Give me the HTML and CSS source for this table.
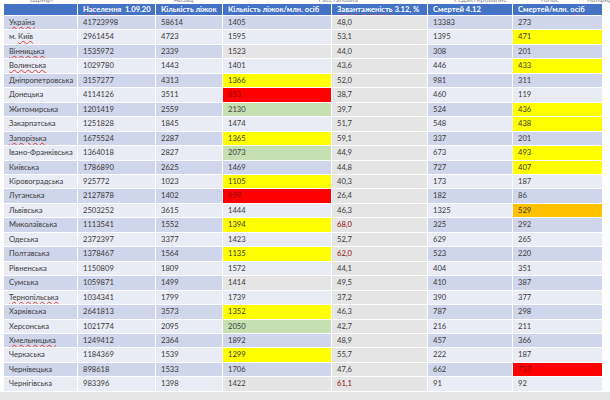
FILE: index.html
```html
<!DOCTYPE html>
<html lang="uk">
<head>
<meta charset="utf-8">
<title>Ліжка</title>
<link rel="stylesheet" href="styles.css">
</head>
<body>
<div class="ribbon">
  <span class="rb rb1">Шрифт</span>
  <span class="rb rb2">Абзац</span>
  <span class="rb rb3">Расстановка</span>
  <span class="rb rb4">Редактирование</span>
  <span class="rb rb5">Голос</span>
  <span class="rb rb6">Конфиденц</span>
</div>
<div class="sheet">
  <div class="row head"><div></div><div><span class="sq">Населення</span>&nbsp; 1.09.20</div><div>Кількість ліжок</div><div>Кількість ліжок/млн. осіб</div><div><span class="sq">Завантаженість</span> 3.12, %</div><div>Смертей 4.12</div><div>Смертей/млн. <span class="sq">осіб</span></div></div>
  <div class="row d"><div><span class="sq">Україна</span></div><div>41723998</div><div>58614</div><div>1405</div><div>48,0</div><div>13383</div><div>273</div></div>
  <div class="row l"><div>м. <span class="sq">Київ</span></div><div>2961454</div><div>4723</div><div>1595</div><div class="y">53,1</div><div>1395</div><div class="y">471</div></div>
  <div class="row d"><div><span class="sq">Вінницька</span></div><div>1535972</div><div>2339</div><div class="gr">1523</div><div>44,0</div><div>308</div><div>201</div></div>
  <div class="row l"><div><span class="sq">Волинська</span></div><div>1029780</div><div>1443</div><div>1401</div><div>43,6</div><div>446</div><div class="y">433</div></div>
  <div class="row d"><div>Дніпропетровська</div><div>3157277</div><div>4313</div><div class="y">1366</div><div class="y">52,0</div><div>981</div><div>311</div></div>
  <div class="row l"><div>Донецька</div><div>4114126</div><div>3511</div><div class="r">853</div><div>38,7</div><div>460</div><div>119</div></div>
  <div class="row d"><div>Житомирська</div><div>1201419</div><div>2559</div><div class="g">2130</div><div>39,7</div><div>524</div><div class="y">436</div></div>
  <div class="row l"><div>Закарпатська</div><div>1251828</div><div>1845</div><div>1474</div><div class="y">51,7</div><div>548</div><div class="y">438</div></div>
  <div class="row d"><div><span class="sq">Запорізька</span></div><div>1675524</div><div>2287</div><div class="y">1365</div><div class="y">59,1</div><div>337</div><div>201</div></div>
  <div class="row l"><div>Івано-Франківська</div><div>1364018</div><div>2827</div><div class="g">2073</div><div>44,9</div><div>673</div><div class="y">493</div></div>
  <div class="row d"><div>Київська</div><div>1786890</div><div>2625</div><div>1469</div><div>44,8</div><div>727</div><div class="y">407</div></div>
  <div class="row l"><div>Кіровоградська</div><div>925772</div><div>1023</div><div class="y">1105</div><div>40,3</div><div>173</div><div>187</div></div>
  <div class="row d"><div>Луганська</div><div>2127878</div><div>1402</div><div class="r">659</div><div class="bl">26,4</div><div>182</div><div>86</div></div>
  <div class="row l"><div>Львівська</div><div>2503252</div><div>3615</div><div>1444</div><div>46,3</div><div>1325</div><div class="o">529</div></div>
  <div class="row d"><div>Миколаївська</div><div>1113541</div><div>1552</div><div class="y">1394</div><div class="r">68,0</div><div>325</div><div>292</div></div>
  <div class="row l"><div>Одеська</div><div>2372397</div><div>3377</div><div>1423</div><div class="y">52,7</div><div>629</div><div>265</div></div>
  <div class="row d"><div>Полтавська</div><div>1378467</div><div>1564</div><div class="y">1135</div><div class="r">62,0</div><div>523</div><div>220</div></div>
  <div class="row l"><div>Рівненська</div><div>1150809</div><div>1809</div><div>1572</div><div>44,1</div><div>404</div><div>351</div></div>
  <div class="row d"><div>Сумська</div><div>1059871</div><div>1499</div><div class="gr">1414</div><div>49,5</div><div>410</div><div>387</div></div>
  <div class="row l"><div><span class="sq">Тернопільська</span></div><div>1034341</div><div>1799</div><div>1739</div><div>37,2</div><div>390</div><div>377</div></div>
  <div class="row d"><div>Харківська</div><div>2641813</div><div>3573</div><div class="y">1352</div><div>46,3</div><div>787</div><div>298</div></div>
  <div class="row l"><div>Херсонська</div><div>1021774</div><div>2095</div><div class="g">2050</div><div>42,7</div><div>216</div><div>211</div></div>
  <div class="row d"><div><span class="sq">Хмельницька</span></div><div>1249412</div><div>2364</div><div>1892</div><div>48,9</div><div>457</div><div>366</div></div>
  <div class="row l"><div>Черкаська</div><div>1184369</div><div>1539</div><div class="y">1299</div><div class="y">55,7</div><div>222</div><div>187</div></div>
  <div class="row d"><div>Чернівецька</div><div>898618</div><div>1533</div><div>1706</div><div>47,6</div><div>662</div><div class="r">737</div></div>
  <div class="row l"><div>Чернігівська</div><div>983396</div><div>1398</div><div class="gr">1422</div><div class="r">61,1</div><div>91</div><div>92</div></div>
</div>
<div class="foot"></div>
</body>
</html>
```

FILE: styles.css
```css
html, body {
  margin: 0;
  padding: 0;
  background: #ffffff;
}
body {
  width: 610px;
  height: 400px;
  overflow: hidden;
  font-family: Lato, "Liberation Sans", sans-serif;
  color: #3a3a3a;
}
.ribbon {
  height: 4px;
  overflow: hidden;
  display: flex;
  font-size: 7px;
  color: #8a8a8a;
  line-height: 7px;
}
.rb {
  margin-top: -4px;
  white-space: nowrap;
}
.rb1 { margin-left: 30px; }
.rb2 { margin-left: 120px; }
.rb3 { margin-left: 125px; }
.rb4 { margin-left: 96px; }
.rb5 { margin-left: 34px; }
.rb6 { margin-left: 28px; }

.sheet {
  margin-left: 4px;
  width: 598px;
}
.row {
  display: grid;
  grid-template-columns: 74px 78px 67px 109px 96px 85px 89px;
  height: 14.46px;
  font-size: 7.6px;
}
.row > div {
  box-sizing: border-box;
  border-right: 1px solid #ffffff;
  border-bottom: 1px solid #ffffff;
  padding-left: 5px;
  line-height: 13.46px;
  white-space: nowrap;
  overflow: hidden;
}
.row > div:last-child { border-right: 0; }
.row.head {
  height: 12px;
  background: #4472c4;
  color: #ffffff;
  font-weight: 700;
  font-size: 7.6px;
}
.row.head > div { line-height: 11px; }
.row.d > div { background: #cfd5ea; }
.row.l > div { background: #e9ebf5; }
.row.d > div:nth-child(5),
.row.l > div:nth-child(5) { background: #e6e5e5; }
.row > div.gr { background: #e6e5e5; }
.row > div.bl { background: #cfd5ea; }
.row > div.y { background: #ffff00; }
.row > div.g { background: #c6e0b4; }
.row > div.o { background: #ffc000; }
.row > div.r { background: #ff0000; color: #8b0a0a; }
.sq {
  text-decoration: underline wavy #e53935;
  text-decoration-thickness: 1px;
  text-underline-offset: 1px;
}
.foot {
  height: 8px;
  background: #e6e6e6;
}
```
